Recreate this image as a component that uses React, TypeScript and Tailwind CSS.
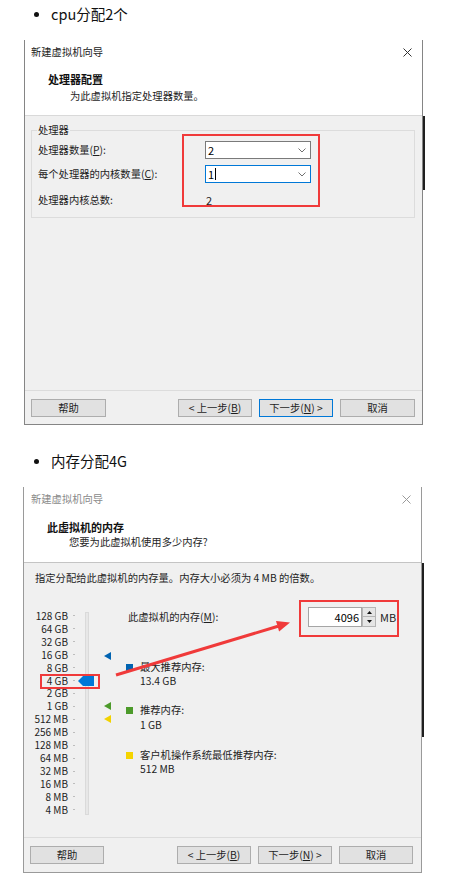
import React from "react";

function CloseIcon({ color }: { color: string }) {
  return (
    <svg width="9" height="9" viewBox="0 0 9 9">
      <path d="M0.5 0.5 L8.5 8.5 M8.5 0.5 L0.5 8.5" stroke={color} strokeWidth="1" fill="none" />
    </svg>
  );
}

function Chevron() {
  return (
    <svg width="8" height="5" viewBox="0 0 8 5">
      <polyline points="0.5,0.5 4,4 7.5,0.5" fill="none" stroke="#707070" strokeWidth="1" />
    </svg>
  );
}

function Btn({ children, className = "" }: { children: React.ReactNode; className?: string }) {
  return (
    <div className={"h-[18px] flex items-center justify-center border bg-[#e1e1e1] leading-none " + className}>
      {children}
    </div>
  );
}

function Combo({ children, focused }: { children: React.ReactNode; focused?: boolean }) {
  return (
    <div
      className={
        "w-[106px] h-[18px] bg-white border flex items-center justify-between pl-[2px] pr-[4px] text-black text-[11px] " +
        (focused ? "border-[#0078d7]" : "border-[#7a7a7a]")
      }
    >
      <div className="flex items-center">{children}</div>
      <Chevron />
    </div>
  );
}

function Tri({ color }: { color: string }) {
  return (
    <svg width="7" height="8" viewBox="0 0 7 8">
      <polygon points="0,4 7,0 7,8" fill={color} />
    </svg>
  );
}

const sizes = [
  "128 GB", "64 GB", "32 GB", "16 GB", "8 GB", "4 GB", "2 GB", "1 GB",
  "512 MB", "256 MB", "128 MB", "64 MB", "32 MB", "16 MB", "8 MB", "4 MB",
];

function Bullet({ text }: { text: string }) {
  return (
    <div className="flex items-center h-[20px]">
      <div className="ml-[34px] w-[5px] h-[5px] rounded-full bg-[#111]" />
      <span className="ml-[12px] text-[14.5px] leading-[20px] text-[#111]">{text}</span>
    </div>
  );
}

function CpuDialog() {
  return (
    <div className="flex">
      <div className="ml-[24px] w-[399px] h-[385px] border-x border-b border-[#858585] flex flex-col text-[10.3px] text-[#1e1e1e]">
        <div className="h-[24px] bg-white flex items-center justify-between pl-[6px] pr-[10px] text-[#222]">
          <span className="leading-[14px]">新建虚拟机向导</span>
          <CloseIcon color="#333" />
        </div>
        <div className="h-[52px] bg-white border-b border-[#d9d9d9] pl-[23px] pt-[8px]">
          <div className="font-bold text-[11px] leading-[14px] text-[#111]">处理器配置</div>
          <div className="mt-[3px] pl-[22px] leading-[14px]">为此虚拟机指定处理器数量。</div>
        </div>
        <div className="flex-1 bg-[#f0f0f0] pt-[14px] pl-[6px] pr-[7px]">
          <div className="h-[88px] border border-[#dcdcdc] pl-[6px]">
            <div className="-mt-[8px] -ml-[1px] w-fit bg-[#f0f0f0] px-[1px] leading-[14px]">处理器</div>
            <div className="mt-[4px] flex items-center h-[18px]">
              <div className="w-[167px] leading-[14px]">
                处理器数量(<span className="underline underline-offset-[1px]">P</span>):
              </div>
              <Combo>2</Combo>
            </div>
            <div className="mt-[6px] flex items-center h-[18px]">
              <div className="w-[167px] leading-[14px]">
                每个处理器的内核数量(<span className="underline underline-offset-[1px]">C</span>):
              </div>
              <Combo focused>
                <span>1</span>
                <span className="ml-[1px] w-[1px] h-[12px] bg-black" />
              </Combo>
            </div>
            <div className="mt-[10px] flex items-center h-[14px]">
              <div className="w-[167px] leading-[14px]">处理器内核总数:</div>
              <div className="pl-[1px] text-[11px] leading-[14px]">2</div>
            </div>
          </div>
        </div>
        <div className="h-[34px] border-t border-[#dcdcdc] bg-[#f0f0f0] flex items-start justify-between pt-[8px] pl-[6px] pr-[7px]">
          <Btn className="w-[75px] border-[#adadad]">帮助</Btn>
          <div className="flex gap-[7px]">
            <Btn className="w-[74px] border-[#adadad]">
              &lt; 上一步(<span className="underline underline-offset-[1px]">B</span>)
            </Btn>
            <Btn className="w-[74px] border-[#0078d7]">
              下一步(<span className="underline underline-offset-[1px]">N</span>) &gt;
            </Btn>
            <Btn className="w-[75px] border-[#adadad]">取消</Btn>
          </div>
        </div>
      </div>
      <div className="w-[2px] mt-[76px] h-[74px] bg-[#1f1f1f]" />
    </div>
  );
}

function MemoryDialog() {
  return (
    <div className="flex">
      <div className="ml-[23px] w-[399px] h-[386px] border-x border-b border-[#9a9a9a] flex flex-col text-[10.3px] text-[#1e1e1e]">
        <div className="h-[24px] bg-white flex items-center justify-between pl-[7px] pr-[10px] text-[#8a8a8a]">
          <span className="leading-[14px]">新建虚拟机向导</span>
          <CloseIcon color="#9a9a9a" />
        </div>
        <div className="h-[52px] bg-white border-b border-[#c4c4c4] pl-[23px] pt-[9px]">
          <div className="font-bold text-[11px] leading-[14px] text-[#111]">此虚拟机的内存</div>
          <div className="mt-[1px] pl-[22px] leading-[14px]">您要为此虚拟机使用多少内存?</div>
        </div>
        <div className="flex-1 bg-[#f0f0f0] pt-[8px]">
          <div className="pl-[11px] leading-[14px]">指定分配给此虚拟机的内存量。内存大小必须为 4 MB 的倍数。</div>
          <div className="mt-[22px] flex items-start">
            <div className="mt-[2.5px] w-[51px]">
              {sizes.map((s) => (
                <div key={s} className="h-[12.93px] flex items-center">
                  <span className="w-[44px] text-right text-[10px] leading-[12px]">{s}</span>
                  <span className="ml-[5px] w-[2px] h-[1px] bg-[#bdbdbd]" />
                </div>
              ))}
            </div>
            <div className="relative w-[51px] h-[212px]">
              <div className="absolute left-[10px] top-[5px] h-[203px] w-[4px] bg-[#e7e7e7] border border-[#dadada]" />
              <div className="absolute left-[29px] top-[45px]">
                <Tri color="#0063b1" />
              </div>
              <div className="absolute left-[3px] top-[69px]">
                <svg width="16" height="10" viewBox="0 0 16 10">
                  <polygon points="0,5 5,0 16,0 16,10 5,10" fill="#0078d7" />
                </svg>
              </div>
              <div className="absolute left-[29px] top-[95px]">
                <Tri color="#4c9a2a" />
              </div>
              <div className="absolute left-[29px] top-[108px]">
                <Tri color="#f2d200" />
              </div>
            </div>
            <div className="flex flex-col">
              <div className="h-[20px] flex items-center">
                <div className="w-[182px] pl-[2px] leading-[14px]">
                  此虚拟机的内存(<span className="underline underline-offset-[1px]">M</span>):
                </div>
                <div className="w-[54px] h-[20px] bg-white border border-[#a5a5a5] flex items-center justify-end pr-[2px] text-[11px] text-black">
                  4096
                </div>
                <div className="w-[14px] h-[20px] flex flex-col">
                  <div className="h-[10px] bg-[#e5e5e5] border border-[#b5b5b5] flex items-center justify-center">
                    <svg width="5" height="3" viewBox="0 0 5 3">
                      <polygon points="2.5,0 5,3 0,3" fill="#111" />
                    </svg>
                  </div>
                  <div className="h-[10px] bg-[#e5e5e5] border border-t-0 border-[#b5b5b5] flex items-center justify-center">
                    <svg width="5" height="3" viewBox="0 0 5 3">
                      <polygon points="0,0 5,0 2.5,3" fill="#111" />
                    </svg>
                  </div>
                </div>
                <span className="ml-[4px] text-[11px] leading-[14px]">MB</span>
              </div>
              <div className="mt-[33px] flex items-center h-[14px]">
                <span className="w-[7px] h-[7px] bg-[#0063b1]" />
                <span className="ml-[7px] leading-[14px]">最大推荐内存:</span>
              </div>
              <div className="pl-[14px] leading-[14px]">13.4 GB</div>
              <div className="mt-[15px] flex items-center h-[14px]">
                <span className="w-[7px] h-[7px] bg-[#4c9a2a]" />
                <span className="ml-[7px] leading-[14px]">推荐内存:</span>
              </div>
              <div className="mt-[1px] pl-[14px] leading-[14px]">1 GB</div>
              <div className="mt-[16px] flex items-center h-[14px]">
                <span className="w-[7px] h-[7px] bg-[#f5d400]" />
                <span className="ml-[7px] leading-[14px]">客户机操作系统最低推荐内存:</span>
              </div>
              <div className="pl-[14px] leading-[14px]">512 MB</div>
            </div>
          </div>
        </div>
        <div className="h-[35px] border-t border-[#dcdcdc] bg-[#f0f0f0] flex items-start justify-between pt-[8px] pl-[6px] pr-[8px]">
          <Btn className="w-[74px] border-[#adadad]">帮助</Btn>
          <div className="flex gap-[7px]">
            <Btn className="w-[74px] border-[#adadad]">
              &lt; 上一步(<span className="underline underline-offset-[1px]">B</span>)
            </Btn>
            <Btn className="w-[74px] border-[#adadad]">
              下一步(<span className="underline underline-offset-[1px]">N</span>) &gt;
            </Btn>
            <Btn className="w-[74px] border-[#adadad]">取消</Btn>
          </div>
        </div>
      </div>
      <div className="w-[2px] mt-[76px] h-[174px] bg-[#1f1f1f]" />
    </div>
  );
}

export default function App() {
  return (
    <div className="relative w-[453px] h-[874px] bg-white overflow-hidden font-['Noto_Sans_CJK_SC','Noto_Sans',sans-serif]">
      <div className="h-[40px] pt-[4px]">
        <Bullet text="cpu分配2个" />
      </div>
      <CpuDialog />
      <div className="h-[62px] pt-[26px]">
        <Bullet text="内存分配4G" />
      </div>
      <MemoryDialog />

      {/* annotations */}
      <div className="absolute left-[182px] top-[134px] w-[138px] h-[73px] border-2 border-[#f03a3a]" />
      <div className="absolute left-[40px] top-[674px] w-[60px] h-[15px] border-2 border-[#f03a3a]" />
      <div className="absolute left-[299px] top-[600px] w-[100px] h-[37px] border-2 border-[#f03a3a]" />
      <svg className="absolute left-0 top-0 pointer-events-none" width="453" height="874" viewBox="0 0 453 874">
        <line x1="116" y1="675" x2="278" y2="626.3" stroke="#f03a3a" strokeWidth="3" />
        <polygon points="290,622.5 279.1,631.5 276,621" fill="#f03a3a" />
      </svg>
    </div>
  );
}
